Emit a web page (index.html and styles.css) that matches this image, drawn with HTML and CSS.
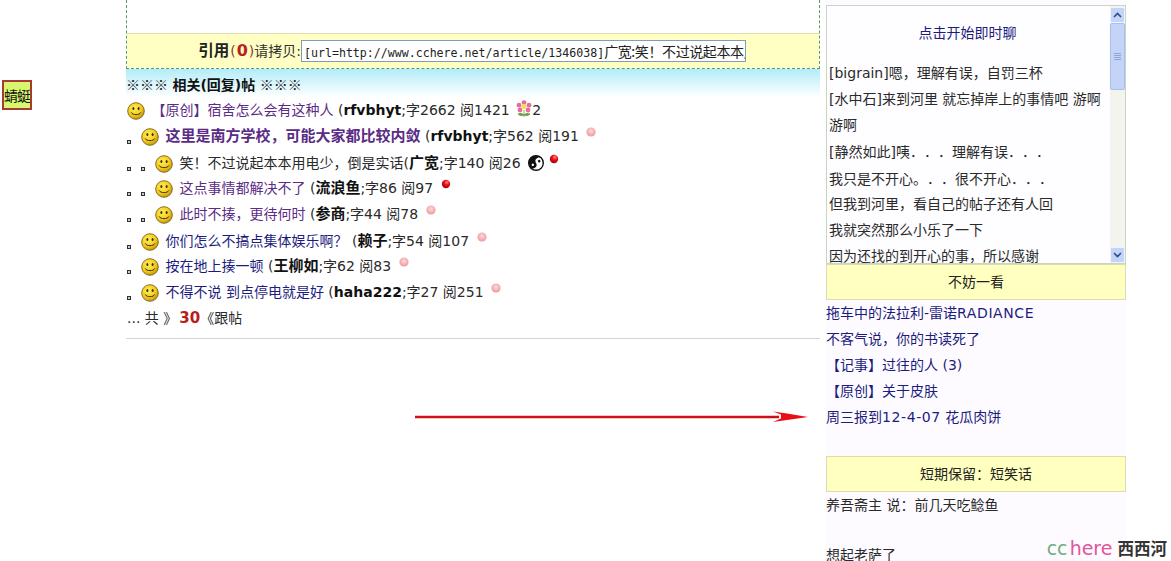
FILE: index.html
```html
<!DOCTYPE html>
<html lang="zh-CN">
<head>
    <meta charset="UTF-8">
    <title>西西河</title>
    <link rel="stylesheet" href="styles.css">
</head>
<body>
    <svg class="icon-defs" width="0" height="0">
        <defs>
            <radialGradient id="smile-fill" cx="40%" cy="35%" r="70%">
                <stop offset="0" stop-color="#ffee5c"/>
                <stop offset="0.6" stop-color="#f4cb1e"/>
                <stop offset="1" stop-color="#b98a0a"/>
            </radialGradient>
            <radialGradient id="red-fill" cx="60%" cy="30%" r="70%">
                <stop offset="0" stop-color="#ff8a8a"/>
                <stop offset="0.45" stop-color="#e8101a"/>
                <stop offset="1" stop-color="#a80008"/>
            </radialGradient>
            <radialGradient id="pink-fill" cx="50%" cy="40%" r="60%">
                <stop offset="0" stop-color="#fbdcdc"/>
                <stop offset="0.7" stop-color="#f3a9ae"/>
                <stop offset="1" stop-color="#ec9ba0"/>
            </radialGradient>
        </defs>
        <symbol id="smile" viewBox="0 0 18 18">
            <circle cx="9" cy="9" r="8.3" fill="url(#smile-fill)" stroke="#7a6410" stroke-width="0.9"/>
            <ellipse cx="6.4" cy="6.6" rx="1" ry="1.5" fill="#3a3008"/>
            <ellipse cx="11.6" cy="6.6" rx="1" ry="1.5" fill="#3a3008"/>
            <path d="M4.2 10.4c1.2 3 8.4 3 9.6 0" fill="none" stroke="#3a3008" stroke-width="1"/>
        </symbol>
        <symbol id="ball-red" viewBox="0 0 10 10">
            <circle cx="5" cy="5" r="4.2" fill="url(#red-fill)"/>
        </symbol>
        <symbol id="ball-pink" viewBox="0 0 10 10">
            <circle cx="5" cy="5" r="4.6" fill="url(#pink-fill)"/>
        </symbol>
        <symbol id="yinyang" viewBox="0 0 16 16">
            <circle cx="8" cy="8" r="7.3" fill="#fff" stroke="#111" stroke-width="1.4"/>
            <g transform="rotate(60 8 8)">
                <path d="M8 .7a7.3 7.3 0 0 0 0 14.6a3.65 3.65 0 0 0 0-7.3a3.65 3.65 0 0 1 0-7.3z" fill="#111"/>
                <circle cx="8" cy="11.65" r="1.2" fill="#fff"/>
                <circle cx="8" cy="4.35" r="1.3" fill="#111"/>
            </g>
        </symbol>
        <symbol id="flower" viewBox="0 0 16 18">
            <path d="M8 10v7M8 15c-2-2-4-2-6-1 2 2 4 2 6 1zM8 15c2-2 4-2 6-1-2 2-4 2-6 1z" fill="#6f9e4a" stroke="#6f9e4a" stroke-width="0.8"/>
            <g fill="#e56f9c">
                <circle cx="8" cy="2.6" r="2.4"/>
                <circle cx="13" cy="5.2" r="2.4"/>
                <circle cx="12" cy="10" r="2.4"/>
                <circle cx="4" cy="10" r="2.4"/>
                <circle cx="3" cy="5.2" r="2.4"/>
            </g>
            <circle cx="8" cy="6.6" r="2.5" fill="#f4e04d"/>
        </symbol>
    </svg>

    <div class="page">
        <div class="gutter">
            <div class="dragonfly">蜻蜓</div>
        </div>

        <div class="main">
            <div class="post-end">
                <div class="quote-bar">
                    <span class="quote-label"><b class="quote-word">引用</b><span class="quote-paren">(</span><b class="quote-count">0</b><span class="quote-paren">)</span>请拷贝:</span>
                    <div class="copy-field">[url=http://www.cchere.net/article/1346038]<span class="copy-cjk">广宽:笑！不过说起本本用电少，倒是实话</span></div>
                </div>
            </div>

            <div class="related-title"><span class="cjk">※※※</span> <b>相关(回复)帖</b> <span class="cjk">※※※</span></div>

            <ul class="thread">
                <li>
                    <svg class="smile"><use href="#smile"/></svg>
                    <a class="visited" href="#">【原创】宿舍怎么会有这种人</a> (<b>rfvbhyt</b>;字2662 阅1421
                    <svg class="flower"><use href="#flower"/></svg>2
                </li>
                <li>
                    <i class="dot"></i><svg class="smile"><use href="#smile"/></svg>
                    <a class="visited title-big" href="#"><b>这里是南方学校，可能大家都比较内敛</b></a> (<b>rfvbhyt</b>;字562 阅191
                    <svg class="ball"><use href="#ball-pink"/></svg>
                </li>
                <li>
                    <i class="dot"></i><i class="dot"></i><svg class="smile"><use href="#smile"/></svg>
                    <span class="cjk">笑！不过说起本本用电少，倒是实话</span>(<b class="name">广宽</b>;字140 阅26
                    <svg class="yinyang"><use href="#yinyang"/></svg>
                    <svg class="ball"><use href="#ball-red"/></svg>
                </li>
                <li>
                    <i class="dot"></i><i class="dot"></i><svg class="smile"><use href="#smile"/></svg>
                    <a class="visited" href="#">这点事情都解决不了</a> (<b class="name">流浪鱼</b>;字86 阅97
                    <svg class="ball"><use href="#ball-red"/></svg>
                </li>
                <li>
                    <i class="dot"></i><i class="dot"></i><svg class="smile"><use href="#smile"/></svg>
                    <a class="visited" href="#">此时不揍，更待何时</a> (<b class="name">参商</b>;字44 阅78
                    <svg class="ball"><use href="#ball-pink"/></svg>
                </li>
                <li>
                    <i class="dot"></i><svg class="smile"><use href="#smile"/></svg>
                    <a class="cjk" href="#">你们怎么不搞点集体娱乐啊？</a> (<b class="name">赖子</b>;字54 阅107
                    <svg class="ball"><use href="#ball-pink"/></svg>
                </li>
                <li>
                    <i class="dot"></i><svg class="smile"><use href="#smile"/></svg>
                    <a href="#">按在地上揍一顿</a> (<b class="name">王柳如</b>;字62 阅83
                    <svg class="ball"><use href="#ball-pink"/></svg>
                </li>
                <li>
                    <i class="dot"></i><svg class="smile"><use href="#smile"/></svg>
                    <a href="#">不得不说 到点停电就是好</a> (<b>haha222</b>;字27 阅251
                    <svg class="ball"><use href="#ball-pink"/></svg>
                </li>
                <li>... 共 》<b class="total">30</b>《跟帖</li>
            </ul>

            <hr class="rule">
        </div>

        <div class="sidebar">
            <div class="chat">
                <div class="chat-body">
                    <a class="chat-title" href="#">点击开始即时聊</a>
                    <div>[bigrain]嗯，理解有误，自罚三杯</div>
                    <div>[水中石]来到河里 就忘掉岸上的事情吧 游啊游啊</div>
                    <div>[静然如此]<span class="cjk">咦．．．理解有误．．．</span></div>
                    <div class="cjk">我只是不开心。．．很不开心．．．</div>
                    <div>但我到河里，看自己的帖子还有人回</div>
                    <div>我就突然那么小乐了一下</div>
                    <div>因为还找的到开心的事，所以感谢</div>
                </div>
                <div class="scrollbar">
                    <div class="scroll-btn">
                        <svg width="9" height="6" viewBox="0 0 9 6"><path d="M1 5l3.5-3.5L8 5" fill="none" stroke="#2f4d8a" stroke-width="1.6"/></svg>
                    </div>
                    <div class="scroll-thumb"></div>
                    <div class="scroll-track"></div>
                    <div class="scroll-btn">
                        <svg width="9" height="6" viewBox="0 0 9 6"><path d="M1 1l3.5 3.5L8 1" fill="none" stroke="#2f4d8a" stroke-width="1.6"/></svg>
                    </div>
                </div>
            </div>

            <div class="side-head">不妨一看</div>
            <ul class="side-links">
                <li><a href="#">拖车中的法拉利-雷诺<span class="latin">RADIANCE</span></a></li>
                <li><a href="#">不客气说，你的书读死了</a></li>
                <li><a href="#">【记事】过往的人 (3)</a></li>
                <li><a href="#">【原创】关于皮肤</a></li>
                <li><a href="#">周三报到<span class="latin">12-4-07</span> 花瓜肉饼</a></li>
            </ul>

            <div class="side-head side-head-gap cjk">短期保留：短笑话</div>
            <div class="joke">
                <p>养吾斋主 说<span class="cjk">：</span>前几天吃鲶鱼</p>
                <p>想起老萨了</p>
            </div>
        </div>
    </div>

    <!-- annotation drawn over the page -->
    <svg class="arrow" width="400" height="16" viewBox="0 0 400 16">
        <path d="M0 7h364" stroke="#d01018" stroke-width="2.4"/>
        <path d="M358 1.5l14 2 21 3.5-21 3-14 2 8-3.5v-4z" fill="#e80f14"/>
    </svg>

    <div class="logo"><span class="logo-cc">cc</span> <span class="logo-here">here</span> <b class="logo-cn">西西河</b></div>
</body>
</html>
```
FILE: styles.css
```css
html, body {
    margin: 0;
    height: 561px;
    overflow: hidden;
    background: #fff;
}
body {
    font-family: "DejaVu Sans", "Noto Sans CJK SC", sans-serif;
    font-size: 14px;
    line-height: 26px;
    color: #2a2a2a;
    position: relative;
    text-spacing-trim: space-all;
}
a {
    color: #1c1c7e;
    text-decoration: none;
}
ul {
    list-style: none;
    margin: 0;
    padding: 0;
}
.icon-defs {
    position: absolute;
}
.cjk {
    font-family: "Noto Sans CJK SC", sans-serif;
}
.latin {
    letter-spacing: 0.6px;
}
.page {
    display: flex;
    align-items: flex-start;
}

/* left gutter */
.gutter {
    width: 124px;
    padding: 80px 0 0 2px;
}
.dragonfly {
    box-sizing: border-box;
    width: 30px;
    height: 30px;
    border: 2px solid #a83a34;
    background: #d8f66e;
    color: #111;
    font-family: "Noto Sans CJK SC", sans-serif;
    font-size: 14px;
    letter-spacing: -1px;
    line-height: 26px;
    white-space: nowrap;
    overflow: hidden;
}

/* main column */
.main {
    width: 694px;
    margin-right: 6px;
}
.post-end {
    height: 69px;
    padding-top: 33px;
    box-sizing: border-box;
    border: 1px dashed #5c9a6a;
    border-width: 0 1px 1px 1px;
}
.quote-bar {
    height: 35px;
    background: #ffffc4;
    border-top: 1px solid #dcdcb0;
    box-sizing: border-box;
    display: flex;
    justify-content: flex-end;
    align-items: center;
    padding-right: 73px;
}
.quote-label {
    color: #333;
}
.quote-word {
    font-size: 15.5px;
    margin-right: 1px;
    color: #222;
}
.quote-paren {
    color: #8a3a2a;
}
.quote-count {
    font-size: 16px;
    margin: 0 1px;
    color: #c01c1c;
}
.copy-field {
    box-sizing: border-box;
    width: 445px;
    height: 22px;
    border: 1px solid #7f9db9;
    background: #fff;
    padding-left: 2px;
    font-family: "DejaVu Sans Mono", monospace;
    font-size: 11.6px;
    line-height: 20px;
    color: #222;
    white-space: nowrap;
    overflow: hidden;
}
.copy-cjk {
    font-family: "Noto Sans CJK SC", sans-serif;
    font-size: 14px;
    letter-spacing: -0.4px;
}
.related-title {
    height: 28px;
    line-height: 30px;
    background: linear-gradient(180deg, #b2ecf9, #fff);
    color: #222;
}
.related-title b {
    color: #111;
}
.thread li {
    height: 26px;
    white-space: nowrap;
    padding-left: 1px;
}
.thread b {
    color: #111;
}
.thread .name {
    font-size: 15px;
}
.thread .visited, .thread .visited b {
    color: #5b2c86;
}
.thread .title-big b {
    font-size: 15px;
}
.thread .total {
    margin-left: 2px;
    font-size: 15px;
    color: #b81c1c;
}
.dot {
    display: inline-block;
    width: 14px;
    height: 4px;
    vertical-align: -3px;
    background: linear-gradient(#ccc, #ccc) 1px 1px / 2px 2px no-repeat, linear-gradient(#333, #333) 0 0 / 4px 4px no-repeat;
}
.smile {
    width: 18px;
    height: 18px;
    vertical-align: middle;
    margin-right: 2px;
}
.flower {
    width: 16px;
    height: 18px;
    vertical-align: -3px;
    margin-left: 2px;
}
.yinyang {
    width: 16px;
    height: 16px;
    vertical-align: -3px;
    margin-left: 3px;
}
.ball {
    width: 10px;
    height: 10px;
    vertical-align: 4px;
    margin-left: 3px;
}
.yinyang + .ball {
    margin-left: 0;
}
.rule {
    height: 1px;
    margin: 7px 0 0;
    border: 0;
    background: #ccd8cc;
}

/* right column */
.sidebar {
    width: 300px;
    height: 561px;
    padding-top: 5px;
    box-sizing: border-box;
    background: #fdfbff;
    flex-shrink: 0;
}
.chat {
    box-sizing: border-box;
    height: 259px;
    display: flex;
    border: 1px solid #c6d6c2;
    background: #fefdff;
    overflow: hidden;
}
.chat-body {
    flex: 1;
    min-width: 0;
    padding: 14px 4px 0 2px;
}
.chat-title {
    display: block;
    text-align: center;
    margin-bottom: 14px;
}
.scrollbar {
    width: 15px;
    display: flex;
    flex-direction: column;
    padding-top: 1px;
    box-sizing: border-box;
    background: #f4f4ee;
}
.scroll-btn {
    height: 16px;
    flex-shrink: 0;
    display: flex;
    align-items: center;
    justify-content: center;
    box-sizing: border-box;
    border: 1px solid #f0f4ff;
    border-radius: 2px;
    background: #c3d4f8;
}
.scroll-thumb {
    height: 67px;
    box-sizing: border-box;
    border: 1px solid #a8bfee;
    border-radius: 2px;
    background: repeating-linear-gradient(#8fa6d6 0 1px, transparent 1px 2px) center / 7px 7px no-repeat, #c3d4f8;
}
.scroll-track {
    flex: 1;
}
.side-head {
    box-sizing: border-box;
    height: 36px;
    line-height: 34px;
    text-align: center;
    background: #ffffc0;
    border: 1px solid #dcdcae;
    color: #222;
}
.side-head-gap {
    margin-top: 26px;
    line-height: 32px;
}
.joke {
    margin-top: -1px;
}
.joke p {
    margin: 0 0 24px;
}

/* overlays */
.arrow {
    position: absolute;
    left: 415px;
    top: 410px;
}
.logo {
    position: absolute;
    right: 4px;
    bottom: 1px;
    font-family: "DejaVu Sans", sans-serif;
    font-size: 19px;
    line-height: 24px;
    white-space: nowrap;
}
.logo-cc {
    color: #6fae7c;
}
.logo-here {
    color: #e0559c;
    margin-left: -4px;
}
.logo-cn {
    margin-left: -1px;
    font-family: "Noto Sans CJK SC", sans-serif;
    font-size: 16.5px;
    color: #333;
}
```
